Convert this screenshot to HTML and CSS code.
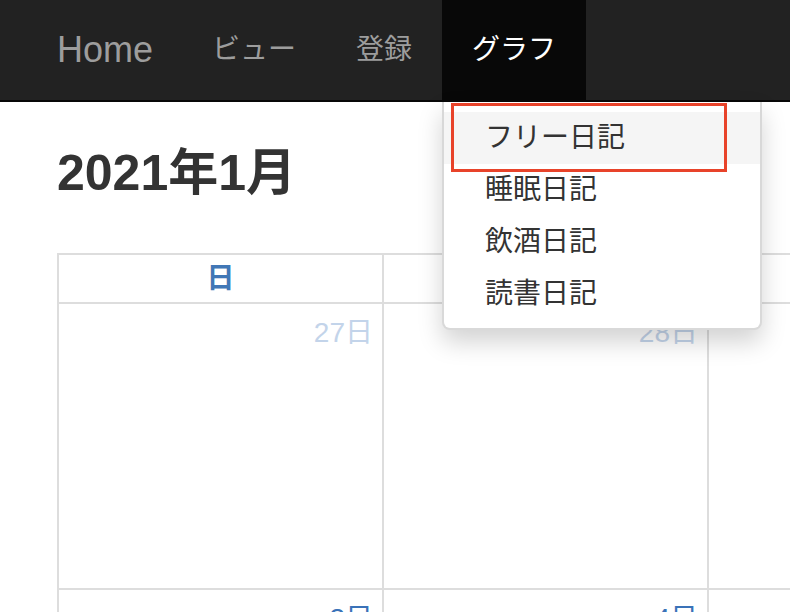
FILE: index.html
```html
<!DOCTYPE html>
<html lang="ja">
<head>
<meta charset="utf-8">
<title>Calendar</title>
<link rel="stylesheet" href="styles.css">
</head>
<body>
<nav class="navbar">
  <a class="brand" href="#">Home</a>
  <ul class="nav">
    <li><a href="#">ビュー</a></li>
    <li><a href="#">登録</a></li>
    <li class="active">
      <a href="#">グラフ</a>
      <ul class="dropdown">
        <li class="hover"><a href="#">フリー日記</a></li>
        <li><a href="#">睡眠日記</a></li>
        <li><a href="#">飲酒日記</a></li>
        <li><a href="#">読書日記</a></li>
        <span class="annot"></span>
      </ul>
    </li>
  </ul>
</nav>
<main class="main">
  <h3 class="title">2021年1月</h3>
  <div class="cal">
    <div class="head">日</div>
    <div class="head">月</div>
    <div class="head">火</div>
    <div class="head">水</div>
    <div class="head">木</div>
    <div class="head">金</div>
    <div class="head">土</div>
    <div class="day other">27日</div>
    <div class="day other">28日</div>
    <div class="day other">29日</div>
    <div class="day other">30日</div>
    <div class="day other">31日</div>
    <div class="day">1日</div>
    <div class="day">2日</div>
    <div class="day">3日</div>
    <div class="day">4日</div>
    <div class="day">5日</div>
    <div class="day">6日</div>
    <div class="day">7日</div>
    <div class="day">8日</div>
    <div class="day">9日</div>
  </div>
</main>
</body>
</html>
```
FILE: styles.css
```css
html, body {
  margin: 0;
  padding: 0;
  overflow: hidden;
  background: #fff;
}
body {
  font-family: "Liberation Sans", "Noto Sans CJK JP", sans-serif;
  color: #333;
  width: 790px;
  height: 612px;
}
a { text-decoration: none; }

.navbar {
  display: flex;
  align-items: stretch;
  height: 100px;
  background: #222;
  border-bottom: 2px solid #080808;
  padding-left: 27px;
  position: relative;
  z-index: 10;
}
.brand {
  font-size: 36px;
  line-height: 100px;
  padding: 0 30px;
  color: #9d9d9d;
}
.nav {
  display: flex;
  list-style: none;
  margin: 0;
  padding: 0;
}
.nav > li {
  position: relative;
}
.nav > li > a {
  display: block;
  font-size: 28px;
  line-height: 100px;
  padding: 0 30px;
  color: #9d9d9d;
}
.nav > li:first-child > a {
  padding-left: 29px;
}
.nav > li.active {
  background: #080808;
}
.nav > li.active > a {
  color: #fff;
}
.dropdown {
  position: absolute;
  top: calc(100% + 2px);
  left: 0;
  width: 320px;
  box-sizing: border-box;
  margin: 0;
  padding: 10px 0 8px;
  list-style: none;
  background: #fff;
  border: 2px solid rgba(0, 0, 0, 0.15);
  border-top: 0;
  border-radius: 0 0 8px 8px;
  box-shadow: 0 12px 24px rgba(0, 0, 0, 0.175);
}
.dropdown li a {
  display: block;
  padding: 6px 40px 6px 41px;
  font-size: 28px;
  line-height: 40px;
  color: #333;
}
.dropdown li.hover a {
  background: #f5f5f5;
}
.annot {
  position: absolute;
  left: 7px;
  top: 1px;
  width: 276px;
  height: 69px;
  box-sizing: border-box;
  border: 3px solid #e8432a;
}

.main {
  padding: 0 0 0 57px;
}
.title {
  margin: 44px 0 0;
  font-size: 50px;
  line-height: 54px;
  font-weight: bold;
  color: #333;
}
.cal {
  margin-top: 53px;
  display: grid;
  grid-template-columns: repeat(7, 323px);
  grid-template-rows: 47px 284px 284px;
  gap: 2px;
  padding: 2px;
  background: #ddd;
  width: max-content;
}
.head {
  background: #fff;
  text-align: center;
  font-size: 28px;
  font-weight: bold;
  color: #4177b6;
  line-height: 47px;
}
.day {
  background: #fff;
  text-align: right;
  padding: 12px 9px 0 0;
  font-size: 28px;
  line-height: 34px;
  color: #3a72b8;
}
.day.other {
  color: #c3d4ea;
}
```
